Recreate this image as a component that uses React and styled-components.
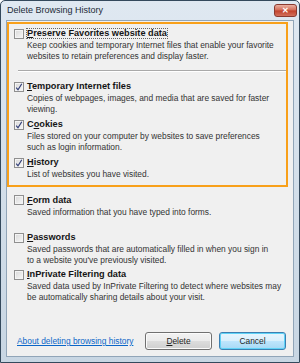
import styled, { createGlobalStyle } from "styled-components";

const Global = createGlobalStyle`
  html, body { margin: 0; padding: 0; background: #ffffff; }
  * { box-sizing: border-box; }
`;

const Window = styled.div`
  width: 300px;
  height: 363px;
  border: 1px solid #34495c;
  border-radius: 5px 5px 0 0;
  background: linear-gradient(#dfe8f1, #c8d6e3);
  display: flex;
  flex-direction: column;
  font-family: "Liberation Sans", Arial, sans-serif;
  font-size: 8.4px;
  color: #2a2a2a;
`;

const TitleBar = styled.div`
  height: 19px;
  display: flex;
  align-items: flex-start;
  justify-content: space-between;
  padding: 3px 2px 0 6px;
`;

const Title = styled.span`
  font-size: 9px;
  color: #1c2a38;
  line-height: 13px;
`;

const CloseBtn = styled.div`
  width: 23px;
  height: 13px;
  border: 1px solid #8a3a30;
  border-radius: 3px;
  background: linear-gradient(#eab0a2, #d26a56 48%, #c2412b 52%, #d2705c);
  display: flex;
  align-items: center;
  justify-content: center;
  color: #ffffff;
  font-size: 8px;
  font-weight: 700;
  line-height: 1;
`;

const Client = styled.div`
  flex: 1;
  margin: 0 5px 5px 5px;
  border: 1px solid #91a5b8;
  background: #f0f0f0;
  padding: 1px 5px 0 0;
  display: flex;
  flex-direction: column;
`;

const Highlight = styled.div`
  border: 2px solid #f8a01a;
  padding: 4px 0 5px 5px;
  display: flex;
  flex-direction: column;
`;

const Divider = styled.div`
  height: 2px;
  background: #a9a9a9;
  border-bottom: 1px solid #ffffff;
  margin: 9px 0 9px 4px;
`;

const Option = styled.div`
  display: flex;
  flex-direction: column;
  margin-top: ${(p) => p.$gap || 0}px;
`;

const Head = styled.div`
  display: flex;
  align-items: center;
  height: 11px;
`;

const Box = styled.span`
  width: 10px;
  height: 10px;
  flex: none;
  border: 1px solid #8f8f8f;
  background: linear-gradient(135deg, #d8d8d8, #f8f8f8);
  box-shadow: inset 0 0 0 1px #f4f4f4;
  display: inline-flex;
  align-items: center;
  justify-content: center;
  margin-right: 2px;
`;

const Label = styled.span`
  font-size: 9.2px;
  font-weight: 700;
  color: #151515;
  padding: 0 1px;
  line-height: 11px;
  outline: ${(p) => (p.$focus ? "1px dotted #666" : "none")};
  outline-offset: -1px;
`;

const Desc = styled.div`
  padding-left: 13px;
  margin-top: 1px;
  line-height: 10.5px;
  white-space: nowrap;
  color: #333333;
`;

const Rest = styled.div`
  padding: 8px 0 0 7px;
  display: flex;
  flex-direction: column;
`;

const Footer = styled.div`
  margin-top: auto;
  padding: 0 2px 6px 10px;
  display: flex;
  align-items: center;
`;

const Link = styled.a`
  color: #0b66c8;
  text-decoration: underline;
  flex: 1;
`;

const Button = styled.button`
  width: 67px;
  height: 18px;
  margin-left: 7px;
  font-family: inherit;
  font-size: 8.4px;
  color: #1e1e1e;
  border: 1px solid ${(p) => (p.$default ? "#3c7fb1" : "#707070")};
  border-radius: 3px;
  background: ${(p) =>
    p.$default
      ? "linear-gradient(#e8f5fd 0%, #d9f0fc 50%, #bee6fd 51%, #a7d9f5 100%)"
      : "linear-gradient(#f2f2f2 0%, #ebebeb 50%, #dddddd 51%, #cfcfcf 100%)"};
  box-shadow: ${(p) => (p.$default ? "inset 0 0 0 1px #5fd3f7" : "inset 0 0 0 1px #fbfbfb")};
  padding: 0;
`;

const Check = () => (
  <svg width="8" height="8" viewBox="0 0 8 8">
    <path d="M1.2 4.6 L3 6.8 L6.8 0.8" fill="none" stroke="#33407a" strokeWidth="1.2" />
  </svg>
);

const Item = ({ checked, label, ul = -1, desc, gap, focus }) => (
  <Option $gap={gap}>
    <Head>
      <Box>{checked && <Check />}</Box>
      <Label $focus={focus}>
        {ul < 0 ? (
          label
        ) : (
          <>
            {label.slice(0, ul)}
            <u>{label[ul]}</u>
            {label.slice(ul + 1)}
          </>
        )}
      </Label>
    </Head>
    <Desc>{desc}</Desc>
  </Option>
);

const App = () => (
  <>
    <Global />
    <Window>
      <TitleBar>
        <Title>Delete Browsing History</Title>
        <CloseBtn>✕</CloseBtn>
      </TitleBar>
      <Client>
        <Highlight>
          <Item
            focus
            ul={0}
            label="Preserve Favorites website data"
            desc={<>Keep cookies and temporary Internet files that enable your favorite<br />websites to retain preferences and display faster.</>}
          />
          <Divider />
          <Item
            checked
            ul={0}
            label="Temporary Internet files"
            desc={<>Copies of webpages, images, and media that are saved for faster<br />viewing.</>}
          />
          <Item
            checked
            ul={1}
            gap={5}
            label="Cookies"
            desc={<>Files stored on your computer by websites to save preferences<br />such as login information.</>}
          />
          <Item
            checked
            ul={0}
            gap={5}
            label="History"
            desc="List of websites you have visited."
          />
        </Highlight>
        <Rest>
          <Item ul={0} label="Form data" desc="Saved information that you have typed into forms." />
          <Item
            ul={0}
            gap={15}
            label="Passwords"
            desc={<>Saved passwords that are automatically filled in when you sign in<br />to a website you've previously visited.</>}
          />
          <Item
            ul={0}
            gap={4}
            label="InPrivate Filtering data"
            desc={<>Saved data used by InPrivate Filtering to detect where websites may<br />be automatically sharing details about your visit.</>}
          />
        </Rest>
        <Footer>
          <Link href="#">About deleting browsing history</Link>
          <Button><u>D</u>elete</Button>
          <Button $default>Cancel</Button>
        </Footer>
      </Client>
    </Window>
  </>
);

export default App;
